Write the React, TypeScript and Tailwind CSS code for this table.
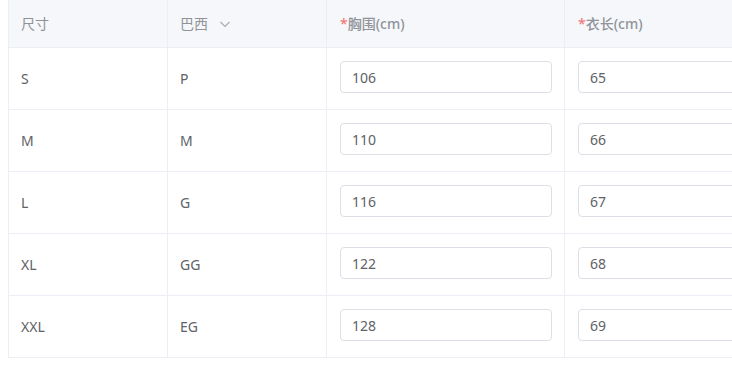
import { useState } from "react";

type Row = { size: string; br: string; chest: string; length: string };

const rows: Row[] = [
  { size: "S", br: "P", chest: "106", length: "65" },
  { size: "M", br: "M", chest: "110", length: "66" },
  { size: "L", br: "G", chest: "116", length: "67" },
  { size: "XL", br: "GG", chest: "122", length: "68" },
  { size: "XXL", br: "EG", chest: "128", length: "69" },
];

function Chevron() {
  return (
    <svg width="12" height="12" viewBox="0 0 12 12" className="ml-[11px]">
      <path d="M1.5 4 L6 8.5 L10.5 4" fill="none" stroke="#a8abb2" strokeWidth="1.1" />
    </svg>
  );
}

function SizeInput({ value }: { value: string }) {
  const [v, setV] = useState(value);
  return (
    <input
      value={v}
      onChange={(e) => setV(e.target.value)}
      className="w-[212px] h-8 rounded-[4px] border border-[#dcdfe6] bg-white pl-[11px] text-sm text-[#606266] outline-none"
    />
  );
}

export default function App() {
  const font = { fontFamily: '"Noto Sans", "Noto Sans CJK SC", sans-serif' };

  return (
    <div className="w-[732px] h-[367px] bg-white overflow-hidden pl-2" style={font}>
      <div className="w-[795px] border-l border-[#ebeef5] text-sm">
        <div className="grid grid-cols-[159px_159px_238px_238px] h-12 bg-[#f5f7fa] text-[#909399]">
          <div className="flex items-center pl-3 border-r border-b border-[#ebeef5]">尺寸</div>
          <div className="flex items-center pl-3 border-r border-b border-[#ebeef5]">
            巴西
            <Chevron />
          </div>
          <div className="flex items-center pl-[13px] border-r border-b border-[#ebeef5] font-medium">
            <span className="text-[#f56c6c] font-normal">*</span>胸围(cm)
          </div>
          <div className="flex items-center pl-[13px] border-r border-b border-[#ebeef5] font-medium">
            <span className="text-[#f56c6c] font-normal">*</span>衣长(cm)
          </div>
        </div>
        {rows.map((r) => (
          <div key={r.size} className="grid grid-cols-[159px_159px_238px_238px] h-[62px] text-[#606266]">
            <div className="flex items-center pl-3 border-r border-b border-[#ebeef5]">{r.size}</div>
            <div className="flex items-center pl-3 border-r border-b border-[#ebeef5]">{r.br}</div>
            <div className="flex items-start pt-[13px] pl-[13px] border-r border-b border-[#ebeef5]">
              <SizeInput value={r.chest} />
            </div>
            <div className="flex items-start pt-[13px] pl-[13px] border-r border-b border-[#ebeef5]">
              <SizeInput value={r.length} />
            </div>
          </div>
        ))}
      </div>
    </div>
  );
}
